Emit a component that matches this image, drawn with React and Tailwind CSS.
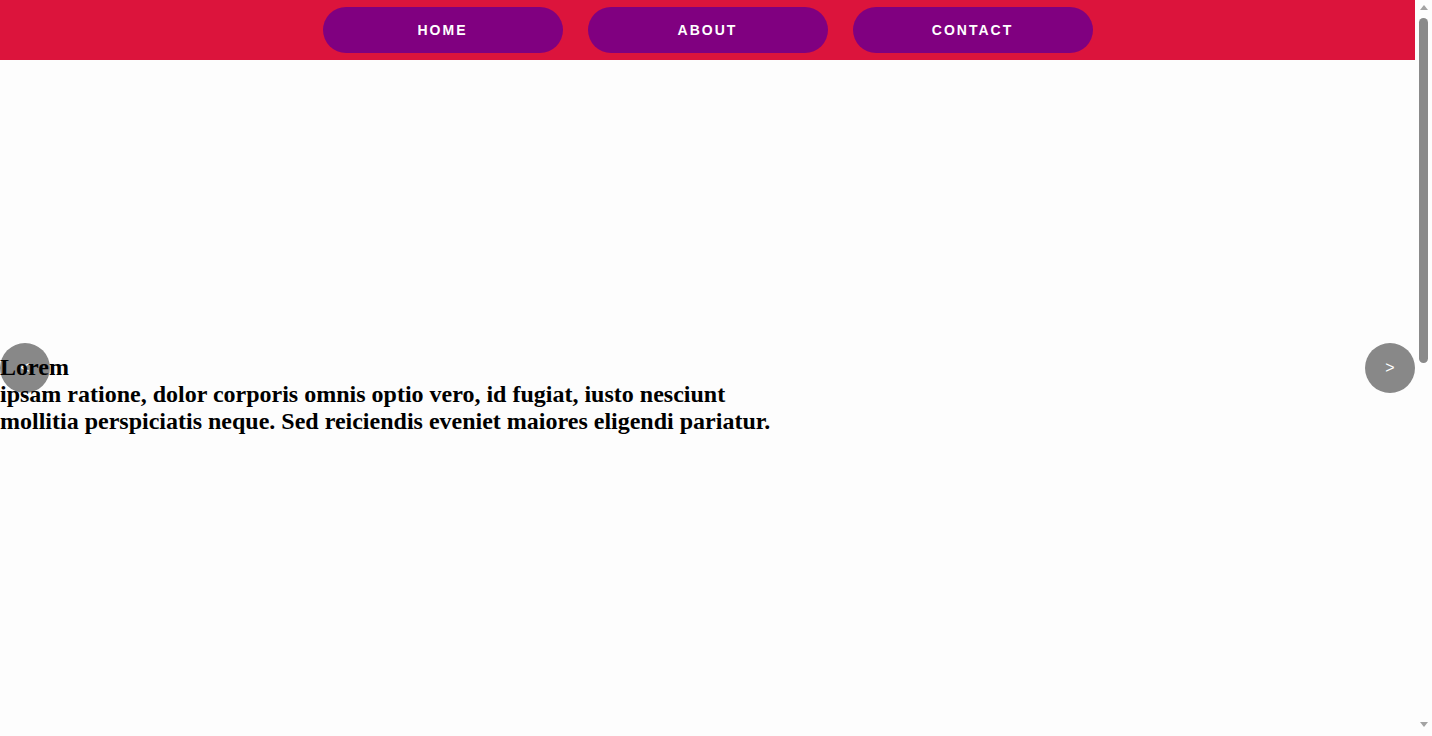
import React from 'react';

const links = ['HOME', 'ABOUT', 'CONTACT'];

const App = () => {
  return (
    <div className="h-[736px] flex bg-[#fdfdfd] overflow-hidden">
      <div className="flex-1 font-['Liberation_Serif',serif] text-black">
        {/* Nav */}
        <nav className="h-[60px] bg-[#dc143c] flex items-center justify-center gap-[25px]">
          {links.map((label) => (
            <a
              key={label}
              href="#"
              className="w-[240px] h-[46px] rounded-full bg-[#800080] flex items-center justify-center text-white text-[14px] font-bold tracking-[2px] font-['Liberation_Sans',Arial,sans-serif]"
            >
              {label}
            </a>
          ))}
        </nav>

        {/* Slider */}
        <section className="relative h-[616px]">
          <button className="absolute left-0 top-[283px] w-[50px] h-[50px] rounded-full bg-[#888888] text-white text-[16px] font-['Liberation_Sans',Arial,sans-serif] flex items-center justify-center">
            &lt;
          </button>
          <button className="absolute right-0 top-[283px] w-[50px] h-[50px] rounded-full bg-[#888888] text-white text-[16px] font-['Liberation_Sans',Arial,sans-serif] flex items-center justify-center">
            &gt;
          </button>
          <div className="relative pt-[294px] text-[24px] font-bold leading-[27px]">
            <p>Lorem</p>
            <p>ipsam ratione, dolor corporis omnis optio vero, id fugiat, iusto nesciunt</p>
            <p>mollitia perspiciatis neque. Sed reiciendis eveniet maiores eligendi pariatur.</p>
          </div>
        </section>
      </div>

      {/* scrollbar */}
      <div className="w-[17px] flex flex-col items-center pt-[5px] pb-[9px]">
        <svg width="8" height="5" viewBox="0 0 8 5">
          <path d="M4 0L8 5H0Z" fill="#a3a3a3" />
        </svg>
        <div className="mt-[8px] w-[9px] h-[345px] rounded-full bg-[#8a8a8a]" />
        <div className="flex-1" />
        <svg width="8" height="5" viewBox="0 0 8 5">
          <path d="M0 0H8L4 5Z" fill="#a3a3a3" />
        </svg>
      </div>
    </div>
  );
};

export default App;
